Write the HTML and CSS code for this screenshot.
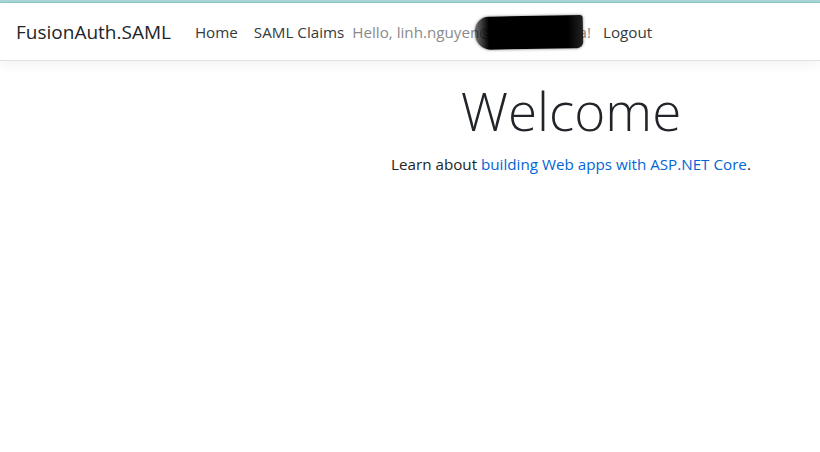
FILE: index.html
```html
<!DOCTYPE html>
<html lang="en">
<head>
<meta charset="utf-8">
<title>Home Page - FusionAuth.SAML</title>
<link rel="stylesheet" href="styles.css">
</head>
<body>
<div class="topline"></div>
<header class="navbar">
  <a class="brand" href="#">FusionAuth.SAML</a>
  <ul class="nav">
    <li><a class="nav-link" href="#">Home</a></li>
    <li><a class="nav-link" href="#">SAML Claims</a></li>
    <li class="nav-text">Hello, linh.nguyen@<span class="hidden-part">a</span>!<span class="redact"></span></li>
    <li><a class="nav-link logout" href="#">Logout</a></li>
  </ul>
</header>
<main class="main">
  <div class="welcome">
    <h1 class="display">Welcome</h1>
    <p class="lead">Learn about <a href="#">building Web apps with ASP.NET Core</a>.</p>
  </div>
</main>
</body>
</html>
```
FILE: styles.css
```css
* { box-sizing: border-box; }
html, body { margin: 0; padding: 0; background: #fff; }
body {
  font-family: "Open Sans", "Noto Sans", sans-serif;
  font-size: 15.2px;
  line-height: 24px;
  color: #212529;
}
.topline {
  height: 3px;
  background: #a6d6d8;
  border-bottom: 1px solid #8fc6c8;
}
.navbar {
  display: flex;
  align-items: center;
  height: 58px;
  padding: 0 16px;
  background: #fff;
  border-bottom: 1px solid #dee2e6;
  box-shadow: 0 4px 12px rgba(0,0,0,.05);
}
.brand {
  font-size: 19px;
  color: #212529;
  text-decoration: none;
  margin-right: 16px;
  line-height: 30px;
}
.nav {
  display: flex;
  align-items: center;
  list-style: none;
  margin: 0;
  padding: 0;
}
.nav-link {
  display: block;
  padding: 8px;
  color: #343a40;
  text-decoration: none;
}
.nav-text {
  position: relative;
  color: #8a8a8a;
  padding: 8px 0;
}
.hidden-part {
  display: inline-block;
  width: 94px;
  text-align: right;
  vertical-align: top;
}
.redact {
  position: absolute;
  left: 123px;
  top: 4px;
  width: 108px;
  height: 33px;
  background: linear-gradient(90deg, rgba(0,0,0,.55) 0, #000 14px, #000 86%, #222 100%);
  border-radius: 14px 3px 6px 16px;
  transform: rotate(-1deg);
  box-shadow: 0 0 3px rgba(0,0,0,.5);
}
.logout { margin-left: 4px; }
.main {
  padding-left: 322px;
  padding-top: 16px;
}
.welcome { text-align: center; }
.display {
  font-size: 53px;
  font-weight: 300;
  line-height: 67px;
  margin: 0 0 8px;
}
.lead { margin: 0; }
.lead a { color: #0366d6; text-decoration: none; }
```
